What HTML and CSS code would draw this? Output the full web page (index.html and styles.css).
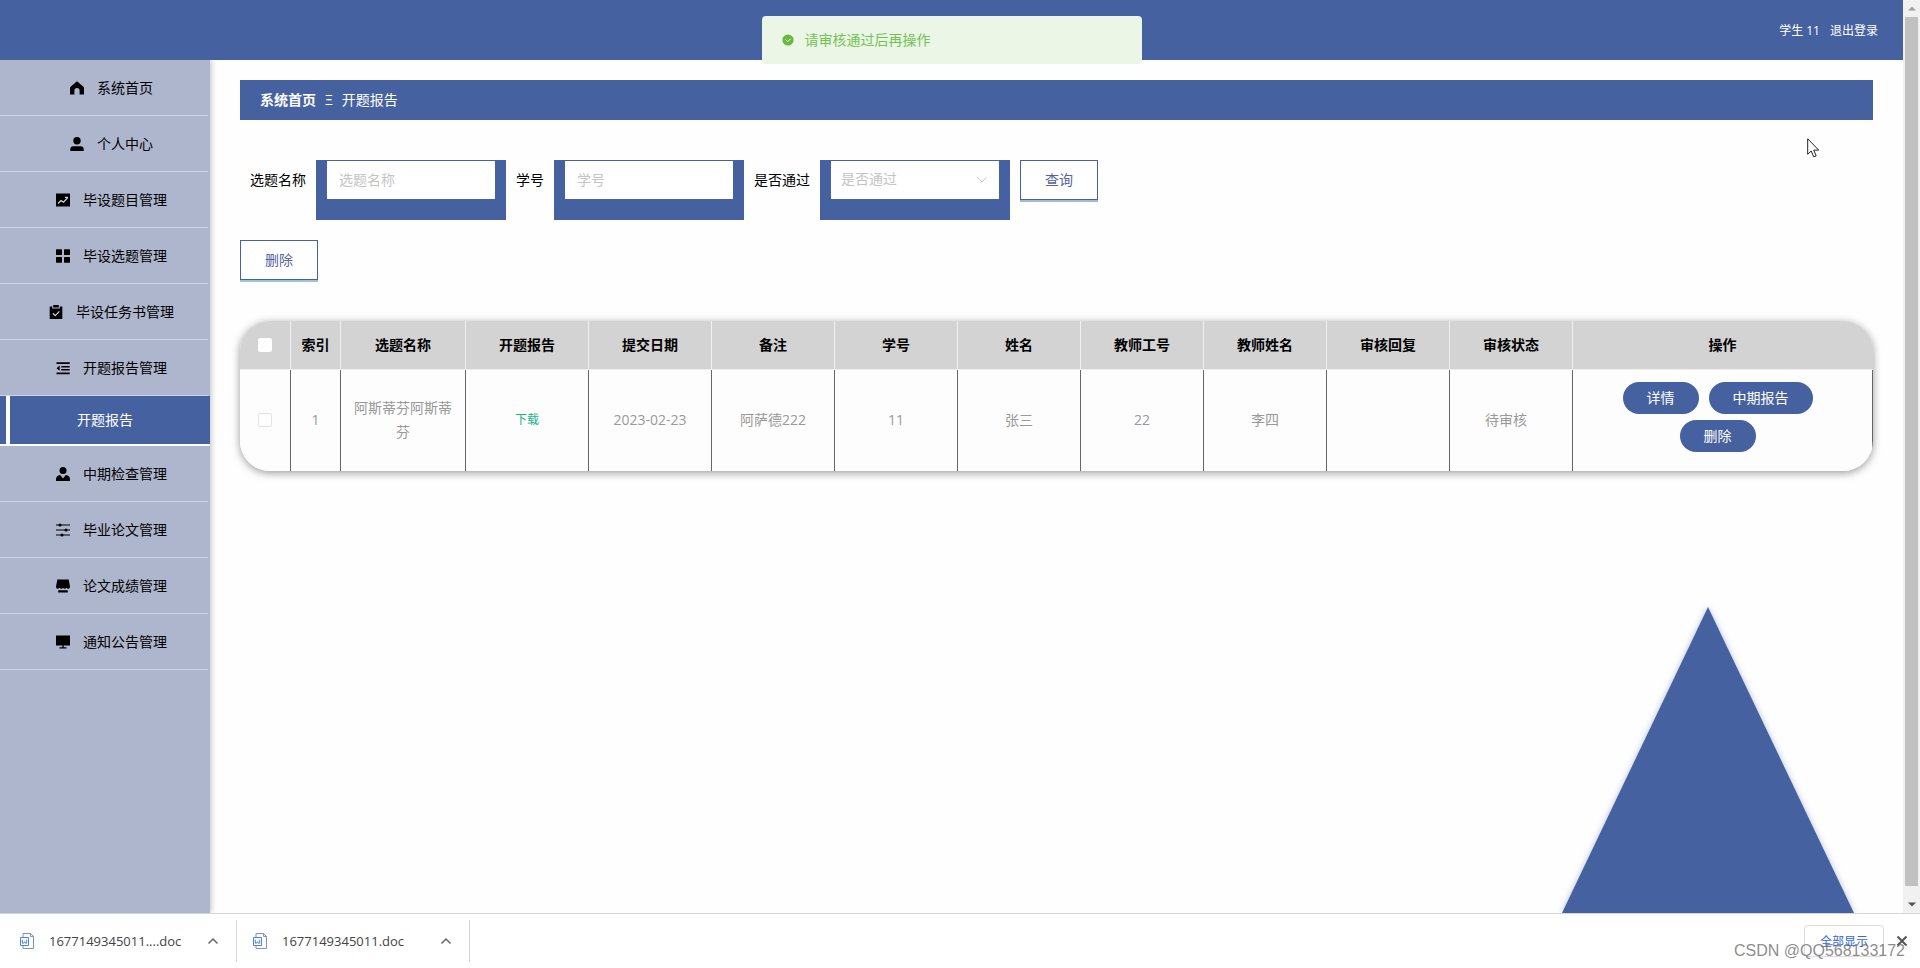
FILE: index.html
```html
<!DOCTYPE html>
<html lang="zh-CN">
<head>
<meta charset="utf-8">
<title>开题报告</title>
<link rel="stylesheet" href="styles.css">
</head>
<body>
<div class="window">
  <div class="viewport">
    <div class="app">
      <header class="header">
        <span>学生 11</span>
        <a href="#logout">退出登录</a>
      </header>
      <div class="body">
        <nav class="sidebar">
          <a class="item" href="#home"><svg class="icon" viewBox="0 0 14 14"><path d="M7 .3 14 6.200V13.500H9.600V9.600a2.600 2.600 0 0 0-5.200 0v3.900H0V6.200z"/></svg><span>系统首页</span></a>
          <a class="item" href="#me"><svg class="icon" viewBox="0 0 14 14"><circle cx="7" cy="3.700" r="3.700"/><path d="M.3 14v-1.500Q.3 9.300 3.500 9.300h7q3.200 0 3.200 3.200V14z"/></svg><span>个人中心</span></a>
          <a class="item" href="#topics"><svg class="icon" viewBox="0 0 14 14"><path d="M0 .5h14v13H0z"/><path class="cut" d="m2 10.500 3-3 2.500 1.700L11.500 5M9 4.300h3"/></svg><span>毕设题目管理</span></a>
          <a class="item" href="#choices"><svg class="icon" viewBox="0 0 14 14"><rect y=".3" width="6" height="5.700" rx=".6"/><rect x="8" y=".3" width="6" height="5.700" rx=".6"/><rect y="8" width="6" height="5.700" rx=".6"/><rect x="8" y="8" width="6" height="5.700" rx=".6"/></svg><span>毕设选题管理</span></a>
          <a class="item" href="#tasks"><svg class="icon" viewBox="0 0 14 14"><path d="M.7 1.500h2.500v2h7.600v-2h2.500V14H.7z"/><path d="M4.200 0h5.600v2.500H4.200z"/><path class="cut" d="m3.800 8.300 2.400 2.300 4.200-4.200"/></svg><span>毕设任务书管理</span></a>
          <a class="item" href="#proposals"><svg class="icon" viewBox="0 0 14 14"><path d="M.5 1.200h13.200v1.800H.5zM5.200 4.900h8.500v1.500H5.200zM5.200 8.100h8.500v1.500H5.200zM.5 11.400h13.200v1.900H.5zM3.700 4.500v5.300L.5 7.200z"/></svg><span>开题报告管理</span></a>
          <a class="item current" href="#proposal"><span>开题报告</span></a>
          <a class="item" href="#midterm"><svg class="icon" viewBox="0 0 14 14"><circle cx="7" cy="3.600" r="3.500"/><path d="M0 14v-2Q.3 8.500 4.200 8L7 11.600 9.800 8q3.900.5 4.200 4v2z"/></svg><span>中期检查管理</span></a>
          <a class="item" href="#thesis"><svg class="icon" viewBox="0 0 14 14"><path d="M0 1.600h14v1H0zM0 6.600h14v1H0zM0 11.600h14v1H0z"/><circle cx="4" cy="2.100" r="1.500"/><circle cx="10" cy="7.100" r="1.500"/><circle cx="6" cy="12.100" r="1.500"/></svg><span>毕业论文管理</span></a>
          <a class="item" href="#scores"><svg class="icon" viewBox="0 0 14 14"><path d="M1.300.5h11.400L14 7.800q0 2-1.700 2-1.200 0-1.800-1-.7 1-1.800 1-1 0-1.700-1-.7 1-1.700 1-1.100 0-1.800-1-.6 1-1.800 1Q0 9.800 0 7.800zM2.200 11.200h9.600v2.300H2.200z"/></svg><span>论文成绩管理</span></a>
          <a class="item" href="#notices"><svg class="icon" viewBox="0 0 14 14"><path d="M0 .5h14v10H0zM6.300 10.500h1.400v2H6.300zM3.500 12.300h7v1.300h-7z"/></svg><span>通知公告管理</span></a>
        </nav>
        <main class="main">
          <div class="crumbs"><a href="#home">系统首页</a><span>Ξ</span><span>开题报告</span></div>
          <form class="search">
            <label for="title">选题名称</label>
            <div class="field"><input id="title" type="text" placeholder="选题名称"></div>
            <label for="number">学号</label>
            <div class="field"><input id="number" type="text" placeholder="学号"></div>
            <label for="passed">是否通过</label>
            <div class="field">
              <select id="passed"><option>是否通过</option><option>是</option><option>否</option></select>
              <svg class="arrow" viewBox="0 0 12 8"><path d="m1.500 1.500 4.500 4.500 4.500-4.500"/></svg>
            </div>
            <button class="plain query" type="button">查询</button>
          </form>
          <div class="actions"><button class="plain" type="button">删除</button></div>
          <div class="card">
            <table class="grid">
              <colgroup><col class="first"><col class="narrow"><col class="name"><col span="9"><col class="ops"></colgroup>
              <thead>
                <tr><th><input type="checkbox" aria-label="全选"></th><th>索引</th><th>选题名称</th><th>开题报告</th><th>提交日期</th><th>备注</th><th>学号</th><th>姓名</th><th>教师工号</th><th>教师姓名</th><th>审核回复</th><th>审核状态</th><th>操作</th></tr>
              </thead>
              <tbody>
                <tr><td><input type="checkbox" aria-label="选择第1行"></td><td>1</td><td>阿斯蒂芬阿斯蒂芬</td><td><a class="download" href="#download">下载</a></td><td>2023-02-23</td><td>阿萨德222</td><td>11</td><td>张三</td><td>22</td><td>李四</td><td></td><td class="state">待审核</td>
                <td><div class="row-actions"><button type="button">详情</button><button type="button">中期报告</button><button type="button">删除</button></div></td></tr>
              </tbody>
            </table>
          </div>
          <svg class="triangle" viewBox="0 0 292 306"><path d="M146 0 292 306H0z"/></svg>
        </main>
      </div>
      <div class="toast" role="status">
        <svg viewBox="0 0 12 12"><circle cx="6" cy="6" r="5.600"/><path d="m3.500 5.500 2.200 2.200 3-3"/></svg>
        <span>请审核通过后再操作</span>
      </div>
    </div>
    <div class="scrollbar">
      <svg viewBox="0 0 16 16"><path class="dim" d="m8 6 4 4H4z"/></svg>
      <div class="thumb"></div>
      <svg viewBox="0 0 16 16"><path d="m8 10 4-4H4z"/></svg>
    </div>
  </div>
  <footer class="downloads">
    <div class="file">
      <svg class="doc" viewBox="0 0 14 16"><path d="M3 4V.5h7.500l3 3v12H3V12"/><path class="fold" d="M10.500.5v3h3"/><path class="w" d="M.5 4.500h8v8h-8zM2.300 6.700v3.500h1.300l.9-1.500.9 1.500h1.300V6.700"/></svg>
      <span>1677149345011....doc</span>
      <button type="button" aria-label="更多"><svg viewBox="0 0 12 8"><path d="m1.500 6.500 4.500-4.500 4.500 4.500"/></svg></button>
    </div>
    <div class="file">
      <svg class="doc" viewBox="0 0 14 16"><path d="M3 4V.5h7.500l3 3v12H3V12"/><path class="fold" d="M10.500.5v3h3"/><path class="w" d="M.5 4.500h8v8h-8zM2.300 6.700v3.500h1.300l.9-1.500.9 1.500h1.300V6.700"/></svg>
      <span>1677149345011.doc</span>
      <button type="button" aria-label="更多"><svg viewBox="0 0 12 8"><path d="m1.500 6.500 4.500-4.500 4.500 4.500"/></svg></button>
    </div>
    <button class="show-all" type="button">全部显示</button>
    <button class="close" type="button" aria-label="关闭"><svg viewBox="0 0 12 12"><path d="m1.500 1.500 9 9m0-9-9 9"/></svg></button>
    <span class="watermark">CSDN @QQ568133172</span>
  </footer>
  <svg class="cursor" viewBox="0 0 13 20"><path d="M.7.800v15.500l3.500-3.300 2.500 5.800 2.500-1-2.500-5.700h5z"/></svg>
</div>
</body>
</html>
```
FILE: styles.css
```css
* { box-sizing: border-box; }
body {
  margin: 0;
  font: 14px/20px "Open Sans", "Noto Sans CJK SC", sans-serif;
  color: #000;
}
a { color: inherit; text-decoration: none; }
button, input, select { font: inherit; margin: 0; }
.window {
  position: relative;
  display: flex;
  flex-direction: column;
  height: 100vh;
  overflow: hidden;
}
.viewport { flex: 1; display: flex; min-height: 0; }
.app {
  position: relative;
  flex: 1;
  display: flex;
  flex-direction: column;
  min-width: 0;
  overflow: hidden;
}
.header {
  display: flex;
  justify-content: flex-end;
  align-items: center;
  gap: 10px;
  height: 60px;
  padding: 2px 25px 0 0;
  background: #4661a0;
  color: #fff;
  font-size: 12px;
}
.body { flex: 1; display: flex; min-height: 0; overflow: hidden; }

.sidebar {
  position: relative;
  z-index: 1;
  width: 210px;
  background: #aeb6cd;
  box-shadow: 1px 0 6px rgba(0, 0, 0, .25);
}
.item {
  display: flex;
  align-items: center;
  justify-content: center;
  gap: 13px;
  height: 56px;
  margin-right: 2px;
  padding-left: 15px;
  border-bottom: 1px solid #cdd7e9;
}
.icon { width: 14px; height: 14px; }
.cut { fill: none; stroke: #c9cfdd; stroke-width: 1.300; }
.current {
  height: 50px;
  margin-right: 0;
  padding: 0;
  border-bottom: 2px solid #fff;
  background: linear-gradient(90deg, #4661a0 6px, #fff 6px, #fff 10px, #4661a0 10px);
  color: #fff;
}

.main {
  flex: 1;
  display: flex;
  flex-direction: column;
  min-width: 0;
  padding: 20px 30px 0;
  background: #fefefe;
}
.crumbs {
  display: flex;
  align-items: center;
  gap: 9px;
  height: 40px;
  padding: 0 20px;
  background: #4661a0;
  color: #fff;
}
.crumbs a { font-weight: 700; }
.search { display: flex; margin: 40px 0 20px; }
.search label { padding: 0 10px; line-height: 40px; }
.field {
  position: relative;
  width: 190px;
  height: 60px;
  padding: 0 10px;
  background: #4661a0;
}
.field input, .field select {
  width: 100%;
  height: 40px;
  padding: 0 12px 2px;
  border: 1px solid #4661a0;
  border-radius: 0;
  background: #fff;
  color: #c4c4c4;
  appearance: none;
}
.field select { padding: 0 10px 2px; }
.field input::placeholder { color: #c4c4c4; }
.arrow {
  position: absolute;
  top: 16px;
  right: 22px;
  width: 12px;
  height: 8px;
  fill: none;
  stroke: #c4c8ce;
  pointer-events: none;
}
.plain {
  width: 78px;
  height: 40px;
  padding: 0;
  border: 1px solid #4661a0;
  background: #fff;
  box-shadow: 0 2px 0 #9cc5cf;
  color: #55649c;
}
.query { margin-left: 10px; box-shadow: 0 2px 0 #a5bbd0; }
.card {
  margin-top: 41px;
  border-radius: 30px;
  overflow: hidden;
  box-shadow: 0 2px 8px rgba(0, 0, 0, .4);
}
.grid {
  width: 100%;
  border-spacing: 0;
  table-layout: fixed;
  text-align: center;
}
.first { width: 51px; }
.narrow { width: 50px; }
.name { width: 125px; }
.ops { width: 300px; }
.grid th {
  height: 49px;
  padding: 0;
  border-right: 1px solid #f0f0f0;
  border-bottom: 1px solid #eee;
  background: #d3d3d3;
}
.grid td {
  height: 101px;
  padding: 0 10px 2px;
  border-right: 1px solid #666;
  background: #fdfdfd;
  color: #999;
  line-height: 24px;
}
.grid th:last-child { border-right-color: #d3d3d3; }
.grid .state { padding-right: 20px; }
.grid input {
  display: block;
  width: 14px;
  height: 14px;
  margin: 0 auto;
  border: 1px solid #e4e4e8;
  border-radius: 2px;
  background: #fff;
  appearance: none;
}
.grid th input { border-color: #fff; }
.download { color: #1fb08a; font-size: 12px; }
.row-actions {
  display: flex;
  flex-wrap: wrap;
  justify-content: center;
  row-gap: 6px;
  padding: 0 30px 6px;
}
.row-actions button {
  height: 32px;
  margin-right: 10px;
  padding: 0 24px;
  border: 0;
  border-radius: 16px;
  background: #4661a0;
  color: #fff;
}
.triangle {
  width: 292px;
  height: 306px;
  margin: auto 19px 0 auto;
  fill: #4661a0;
  filter: drop-shadow(0 0 3px rgba(70, 97, 160, .4));
}
.toast {
  position: absolute;
  top: 16px;
  left: 50%;
  display: flex;
  align-items: center;
  gap: 11px;
  width: 380px;
  height: 48px;
  margin-left: -190px;
  padding: 0 20px;
  border-radius: 4px;
  background: #ebf6e6;
  color: #74c255;
}
.toast svg { width: 12px; height: 12px; fill: #67b83f; }
.toast path { fill: none; stroke: #fff; }

.scrollbar {
  display: flex;
  flex-direction: column;
  align-items: center;
  width: 17px;
  background: #f1f1f1;
}
.scrollbar svg { width: 16px; height: 17px; fill: #505050; }
.scrollbar .dim { fill: #a3a3a3; }
.thumb { flex: 1; width: 13px; margin-bottom: 10px; background: #c1c1c1; }

.downloads {
  position: relative;
  display: flex;
  align-items: center;
  height: 55px;
  padding-right: 12px;
  border-top: 1px solid #d5d5d8;
  background: #fff;
  color: #444;
  font-size: 13px;
}
.file {
  display: flex;
  align-items: center;
  width: 237px;
  height: 42px;
  padding: 0 17px 0 20px;
  border-right: 1px solid #d5d5d8;
}
.file + .file { width: 233px; padding-left: 16px; }
.file span { flex: 1; padding-left: 15px; }
.file button, .close { display: flex; padding: 0; border: 0; background: none; }
.file button svg { width: 12px; height: 8px; fill: none; stroke: #666; stroke-width: 1.500; }
.doc { width: 14px; height: 16px; fill: none; stroke: #7d93bb; }
.doc .w { stroke: #4b83d6; fill: #fff; }
.show-all {
  width: 80px;
  height: 32px;
  margin: 0 12px 0 auto;
  padding: 2px 0 0;
  border: 1px solid #dadce0;
  border-radius: 4px;
  background: #fff;
  color: #3267d6;
  font-size: 12px;
}
.close svg { width: 12px; height: 12px; fill: none; stroke: #555; stroke-width: 2; }
.watermark {
  position: absolute;
  right: 15px;
  bottom: 7px;
  color: rgba(110, 110, 110, .8);
  font: 16px/20px "Liberation Sans", sans-serif;
}
.cursor {
  position: absolute;
  top: 138px;
  right: 100px;
  width: 13px;
  height: 20px;
  fill: #fff;
  stroke: #222;
}
```
